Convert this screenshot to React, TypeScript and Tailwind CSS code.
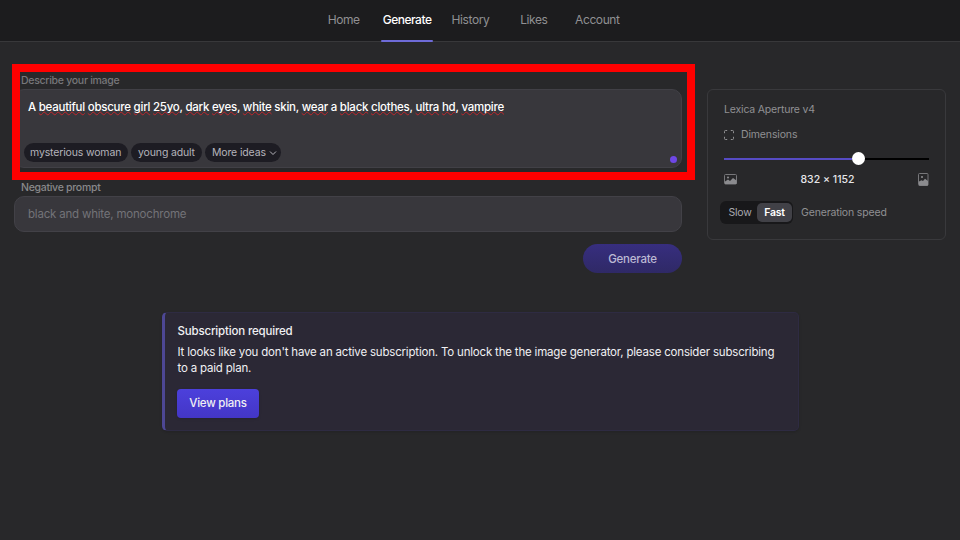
import React from 'react';

const navItems = ['Home', 'Generate', 'History', 'Likes', 'Account'];

function Nav() {
  return (
    <header className="h-[42px] shrink-0 border-b border-[#38383a] bg-[#1c1c1e] pl-[312px]">
      <nav className="grid h-[42px] w-[317px] grid-cols-5">
        {navItems.map((item) => {
          const active = item === 'Generate';
          return (
            <a
              key={item}
              className={
                active
                  ? 'flex flex-col items-center text-[12px] font-medium leading-[40px] tracking-[-0.5px] text-white'
                  : 'flex flex-col items-center text-[12px] leading-[40px] tracking-[-0.4px] text-[#909093]'
              }
            >
              <span>{item}</span>
              {active && <span className="h-[2px] w-[52px] rounded-full bg-[#6e6bd8]" />}
            </a>
          );
        })}
      </nav>
    </header>
  );
}

function Wrong({ children }: { children: React.ReactNode }) {
  return (
    <span className="underline decoration-[#c0262c] decoration-wavy decoration-[1px] underline-offset-[0px] [text-decoration-skip-ink:none]">
      {children}
    </span>
  );
}

function Prompt() {
  return (
    <div className="relative mt-[1px] flex h-[79px] flex-col rounded-[10px] border border-[#414046] bg-[#38373c] pt-[8px]">
      <p className="whitespace-nowrap pl-[13px] text-[11.5px] font-medium leading-[18px] tracking-[-0.25px] text-white">
        A <Wrong>beautiful</Wrong> <Wrong>obscure</Wrong> <Wrong>girl</Wrong> <Wrong>25yo</Wrong>, <Wrong>dark</Wrong>{' '}
        <Wrong>eyes</Wrong>, <Wrong>white</Wrong> skin, <Wrong>wear</Wrong> a <Wrong>black</Wrong> <Wrong>clothes</Wrong>,{' '}
        <Wrong>ultra</Wrong> <Wrong>hd</Wrong>, <Wrong>vampire</Wrong>
      </p>
      <div className="mt-[27px] flex gap-[3px] pl-[9px] text-[10.5px] leading-[19px] tracking-[-0.15px] text-[#b5b4bb]">
        <span className="h-[19px] w-[104px] whitespace-nowrap rounded-full bg-[#1d1c23] pl-[6px]">mysterious woman</span>
        <span className="h-[19px] w-[71px] whitespace-nowrap rounded-full bg-[#1d1c23] text-center">young adult</span>
        <span className="flex h-[19px] w-[76px] items-center gap-[3px] whitespace-nowrap rounded-full bg-[#1d1c23] pl-[7px]">
          More ideas
          <svg viewBox="0 0 8 8" className="h-[8px] w-[8px]" fill="none" stroke="#b5b4bb" strokeWidth="1">
            <path d="M1 2.500 4 5.500 7 2.500" />
          </svg>
        </span>
      </div>
      <span className="absolute bottom-[4px] right-[4px] h-[7px] w-[7px] rounded-full bg-[#6e47e6]" />
    </div>
  );
}

function Settings() {
  return (
    <aside className="mt-[16px] h-[151px] w-[239px] rounded-[6px] border border-[#39393c] pl-[12px] pt-[11px] text-[10.5px] text-[#909093]">
      <div className="pl-[4px] leading-[18px] tracking-[-0.18px]">Lexica Aperture v4</div>
      <div className="mt-[7px] flex items-center gap-[7px] pl-[4px] leading-[18px] tracking-[-0.15px]">
        <svg viewBox="0 0 10 10" className="h-[10px] w-[10px]" fill="none" stroke="#909093" strokeWidth="1">
          <path d="M.5 3.200V1.500a1 1 0 0 1 1-1H3.200M6.800.5h1.700a1 1 0 0 1 1 1V3.200M9.500 6.800v1.700a1 1 0 0 1-1 1H6.800M3.200 9.500H1.500a1 1 0 0 1-1-1V6.800" />
        </svg>
        Dimensions
      </div>
      <div className="ml-[4px] mt-[8px] flex h-[13px] w-[205px] items-center">
        <span className="h-[2px] w-[128px] bg-[#564bc4]" />
        <span className="h-[13px] w-[13px] rounded-full bg-white" />
        <span className="h-[2px] flex-1 bg-black" />
      </div>
      <div className="ml-[4px] mt-[5px] flex h-[18px] w-[205px] items-center justify-between">
        <svg viewBox="0 0 13 11" className="h-[11px] w-[13px]">
          <rect x=".5" y=".5" width="12" height="9.500" rx="1" fill="none" stroke="#77777a" />
          <circle cx="4" cy="3.500" r="1" fill="#909093" />
          <path d="M1 7.500 4 5.500 6 7l3-3 3.500 2.500V10H1Z" fill="#8b8b8e" />
        </svg>
        <span className="pt-[1px] text-[10.5px] font-medium text-[#e6e6e9]">832 × 1152</span>
        <svg viewBox="0 0 11 13" className="h-[13px] w-[11px]">
          <rect x=".5" y=".5" width="9.500" height="12" rx="1" fill="none" stroke="#77777a" />
          <circle cx="4" cy="4" r="1" fill="#909093" />
          <path d="M1 8.500 3.500 7.200 5 8 7 5.800 10 8v4.500H1Z" fill="#8b8b8e" />
        </svg>
      </div>
      <div className="mt-[13px] flex items-center gap-[8px]">
        <div className="flex h-[23px] w-[73px] items-center rounded-[6px] bg-[#18181a] p-[2px] pr-[1px]">
          <span className="flex-1 pl-[1px] text-center tracking-[-0.2px] text-[#a9a9b0]">Slow</span>
          <span className="h-[19px] w-[35px] rounded-[5px] bg-[#414147] text-center font-semibold leading-[19px] tracking-[-0.2px] text-white">
            Fast
          </span>
        </div>
        <span className="tracking-[-0.16px]">Generation speed</span>
      </div>
    </aside>
  );
}

function Alert() {
  return (
    <section className="ml-[162px] mt-[39px] h-[119px] w-[637px] rounded-[5px] border border-l-[3px] border-[#2e2b42] border-l-[#4d4794] bg-[#2b2835] pl-[12px] pt-[10px] text-[11.5px] text-[#f0f0f3] shadow-sm">
      <h2 className="pl-[0.5px] font-medium leading-[16px] tracking-[-0.17px]">Subscription required</h2>
      <p className="mt-[5px] whitespace-nowrap pl-[0.5px] leading-[16px] tracking-[-0.19px]">
        It looks like you don't have an active subscription. To unlock the the image generator, please consider subscribing
        <br />
        to a paid plan.
      </p>
      <button className="mt-[13px] block h-[29px] w-[82px] rounded-[4px] bg-linear-to-b from-[#4c40dc] to-[#4336c6] font-medium tracking-[-0.25px] shadow-sm">
        View plans
      </button>
    </section>
  );
}

export default function App() {
  return (
    <div className="relative flex h-[540px] w-[960px] flex-col overflow-hidden bg-[#28282a] font-[Inter,sans-serif]">
      <Nav />
      <main className="flex gap-[25px] pl-[14px] pt-[31px]">
        <div className="flex w-[668px] flex-col">
          <label className="pl-[7px] text-[10.5px] font-medium leading-[15px] tracking-[-0.28px] text-[#77777a]">Describe your image</label>
          <Prompt />
          <label className="mt-[12px] pl-[7px] text-[10.5px] font-medium leading-[15px] tracking-[-0.28px] text-[#88888b]">Negative prompt</label>
          <div className="mt-[1px] h-[36px] rounded-[10px] border border-[#424147] bg-[#38373c] pl-[13px] text-[11.5px] leading-[34px] tracking-[-0.2px] text-[#737378]">
            black and white, monochrome
          </div>
          <button className="mt-[12px] h-[29px] w-[99px] self-end rounded-full bg-linear-to-b from-[#372e7f] to-[#2f2966] pt-[2px] text-[11.5px] font-medium tracking-[-0.25px] text-[#bcb9d3]">
            Generate
          </button>
        </div>
        <Settings />
      </main>
      <Alert />
      <div className="absolute left-[12px] top-[64px] h-[116px] w-[683px] border-[8px] border-[#ff0000]" />
    </div>
  );
}
